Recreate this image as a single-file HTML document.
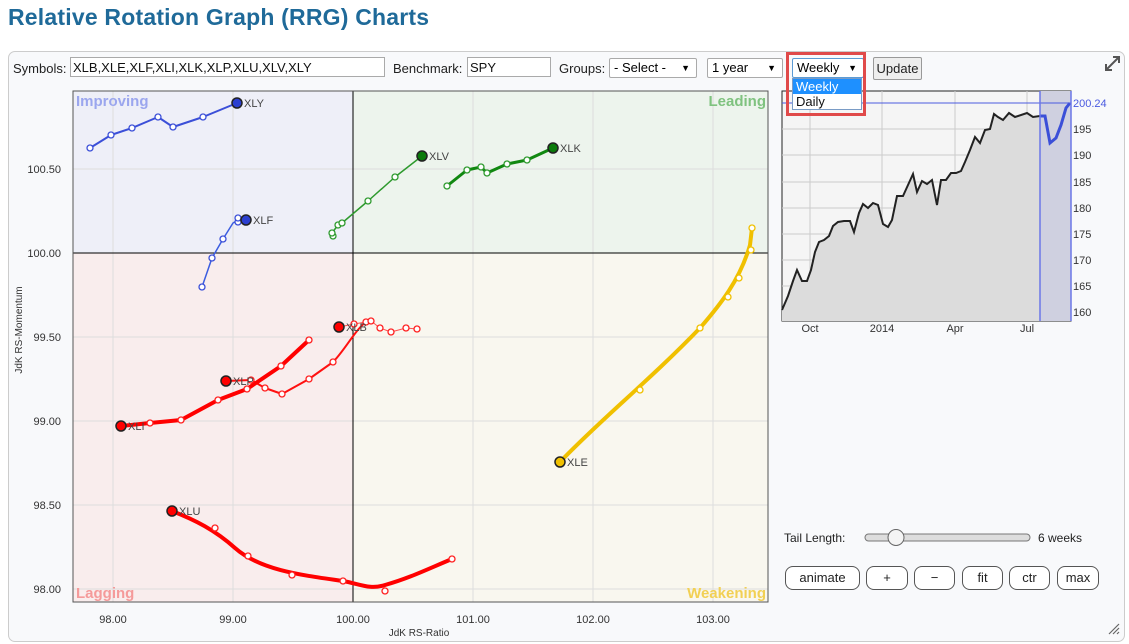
<!DOCTYPE html>
<html><head><meta charset="utf-8"><style>
body{margin:0;width:1129px;height:644px;background:#fff;font-family:"Liberation Sans",Arial,sans-serif;overflow:hidden;position:relative}
h1{position:absolute;left:8px;top:4px;margin:0;font-size:23px;font-weight:bold;color:#1f6a99;letter-spacing:0.2px}
.panel{position:absolute;left:8px;top:51px;width:1115px;height:589px;border:1px solid #ccc;border-radius:7px;background:#f8f9fb}
.ctl{position:absolute;font-size:13px;color:#222;z-index:3}
.in{position:absolute;height:20px;border:1px solid #aaa;background:#fff;font-size:13px;line-height:20px;padding-left:2px;box-sizing:border-box;color:#111;z-index:3}
.sel{position:absolute;height:20px;border:1px solid #aaa;background:#fff;font-size:13px;line-height:18px;padding-left:4px;box-sizing:border-box;border-radius:2px;z-index:3}
.sel b{position:absolute;right:6px;top:0;font-size:9px}
.btn{position:absolute;height:24px;border:1px solid #555;border-radius:8px;background:#fff;font-size:13px;line-height:22px;text-align:center;box-sizing:border-box;color:#222;z-index:3}
svg{z-index:1}
</style></head><body>
<h1>Relative Rotation Graph (RRG) Charts</h1>
<div class="panel"></div>
<svg style="position:absolute;left:0;top:0" width="1129" height="644">
<g font-family="Liberation Sans,Arial,sans-serif">
<path d="M1106 70 L1119 57 M1113 57 L1119 57 L1119 63 M1106 64 L1106 70 L1112 70" stroke="#555" stroke-width="2" fill="none"/>
<rect x="73" y="91" width="280" height="162" fill="#eeeff8"/>
<rect x="353" y="91" width="415" height="162" fill="#edf4ed"/>
<rect x="73" y="253" width="280" height="349" fill="#f9eded"/>
<rect x="353" y="253" width="415" height="349" fill="#f9f7ef"/>
<g stroke="#ddd" stroke-width="1">
<line x1="113" y1="91" x2="113" y2="602"/><line x1="233" y1="91" x2="233" y2="602"/><line x1="473" y1="91" x2="473" y2="602"/><line x1="593" y1="91" x2="593" y2="602"/><line x1="713" y1="91" x2="713" y2="602"/>
<line x1="73" y1="169" x2="768" y2="169"/><line x1="73" y1="337" x2="768" y2="337"/><line x1="73" y1="421" x2="768" y2="421"/><line x1="73" y1="505" x2="768" y2="505"/><line x1="73" y1="589" x2="768" y2="589"/>
</g>
<line x1="353" y1="91" x2="353" y2="602" stroke="#000"/>
<line x1="73" y1="253" x2="768" y2="253" stroke="#000"/>
<rect x="73" y="91" width="695" height="511" fill="none" stroke="#555"/>
<g font-weight="bold" font-size="15">
<text x="76" y="106" fill="#9ba6ee">Improving</text>
<text x="766" y="106" fill="#7fc27f" text-anchor="end">Leading</text>
<text x="76" y="598" fill="#f59a9a">Lagging</text>
<text x="766" y="598" fill="#f2d054" text-anchor="end">Weakening</text>
</g>
<g font-size="11" fill="#333" text-anchor="end">
<text x="61" y="173">100.50</text><text x="61" y="257">100.00</text><text x="61" y="341">99.50</text><text x="61" y="425">99.00</text><text x="61" y="509">98.50</text><text x="61" y="593">98.00</text>
</g>
<g font-size="11" fill="#333" text-anchor="middle">
<text x="113" y="623">98.00</text><text x="233" y="623">99.00</text><text x="353" y="623">100.00</text><text x="473" y="623">101.00</text><text x="593" y="623">102.00</text><text x="713" y="623">103.00</text>
<text x="419" y="636" font-size="10">JdK RS-Ratio</text>
<text transform="translate(22,330) rotate(-90)" font-size="10">JdK RS-Momentum</text>
</g>
<g fill="none" stroke-linejoin="round" stroke-linecap="round">
<polyline points="90,148 111,135 132,128 158,117 173,127 203,117 237,103" stroke="#3b4fd8" stroke-width="2"/>
<polyline points="202,287 212,258 223,239 233,223 238,220 246,220" stroke="#3b5de0" stroke-width="1.5"/>
<polyline points="333,236 332,233 338,225 342,223 368,201 395,177 422,156" stroke="#2e9a2e" stroke-width="1.5"/>
<polyline points="447,186 467,170 481,167 487,173 507,164 527,160 553,148" stroke="#118811" stroke-width="3"/>
<path d="M560,462 C600,420 650,380 700,328 C720,305 740,280 750,245 L752,228" stroke="#f0c000" stroke-width="4"/>
<polyline points="339,327 354,324 366,322 371,321 380,328 391,332 406,328 417,329" stroke="#ff5050" stroke-width="1"/>
<path d="M226,381 L251,380 265,388 282,394 309,379 333,362 C345,350 355,330 366,322" stroke="#ff1010" stroke-width="2"/>
<path d="M121,426 L150,423 181,420 218,400 247,389 281,366 309,340" stroke="#ff0000" stroke-width="4"/>
<path d="M172,511 C195,520 215,530 235,548 C260,570 300,575 343,581 C360,584 370,590 385,585 C410,578 430,568 452,559" stroke="#ff0000" stroke-width="4"/>
</g>
<g fill="#fff" stroke-width="1.3">
<g stroke="#3b4fd8"><circle cx="90" cy="148" r="3"/><circle cx="111" cy="135" r="3"/><circle cx="132" cy="128" r="3"/><circle cx="158" cy="117" r="3"/><circle cx="173" cy="127" r="3"/><circle cx="203" cy="117" r="3"/><circle cx="202" cy="287" r="3"/><circle cx="212" cy="258" r="3"/><circle cx="223" cy="239" r="3"/><circle cx="238" cy="222" r="3"/><circle cx="238" cy="218" r="3"/></g>
<g stroke="#2e9a2e"><circle cx="333" cy="236" r="3"/><circle cx="332" cy="233" r="3"/><circle cx="338" cy="225" r="3"/><circle cx="342" cy="223" r="3"/><circle cx="368" cy="201" r="3"/><circle cx="395" cy="177" r="3"/><circle cx="447" cy="186" r="3"/><circle cx="467" cy="170" r="3"/><circle cx="481" cy="167" r="3"/><circle cx="487" cy="173" r="3"/><circle cx="507" cy="164" r="3"/><circle cx="527" cy="160" r="3"/></g>
<g stroke="#f0c000"><circle cx="640" cy="390" r="3"/><circle cx="700" cy="328" r="3"/><circle cx="728" cy="297" r="3"/><circle cx="739" cy="278" r="3"/><circle cx="751" cy="250" r="3"/><circle cx="752" cy="228" r="3"/></g>
<g stroke="#ff2020"><circle cx="354" cy="324" r="3"/><circle cx="366" cy="322" r="3"/><circle cx="371" cy="321" r="3"/><circle cx="380" cy="328" r="3"/><circle cx="391" cy="332" r="3"/><circle cx="406" cy="328" r="3"/><circle cx="417" cy="329" r="3"/>
<circle cx="251" cy="380" r="3"/><circle cx="265" cy="388" r="3"/><circle cx="282" cy="394" r="3"/><circle cx="309" cy="379" r="3"/><circle cx="333" cy="362" r="3"/>
<circle cx="150" cy="423" r="3"/><circle cx="181" cy="420" r="3"/><circle cx="218" cy="400" r="3"/><circle cx="247" cy="389" r="3"/><circle cx="281" cy="366" r="3"/><circle cx="309" cy="340" r="3"/>
<circle cx="215" cy="528" r="3"/><circle cx="248" cy="556" r="3"/><circle cx="292" cy="575" r="3"/><circle cx="343" cy="581" r="3"/><circle cx="385" cy="591" r="3"/><circle cx="452" cy="559" r="3"/></g>
</g>
<g stroke="#222" stroke-width="1.5">
<circle cx="237" cy="103" r="5" fill="#2b3fd0"/><circle cx="246" cy="220" r="5" fill="#2b3fd0"/>
<circle cx="422" cy="156" r="5" fill="#0a7a0a"/><circle cx="553" cy="148" r="5" fill="#0a7a0a"/>
<circle cx="560" cy="462" r="5" fill="#f0c000"/>
<circle cx="339" cy="327" r="5" fill="#ff0000"/><circle cx="226" cy="381" r="5" fill="#ff0000"/><circle cx="121" cy="426" r="5" fill="#ff0000"/><circle cx="172" cy="511" r="5" fill="#ff0000"/>
</g>
<g font-size="11" fill="#444">
<text x="244" y="107">XLY</text><text x="253" y="224">XLF</text><text x="429" y="160">XLV</text><text x="560" y="152">XLK</text><text x="567" y="466">XLE</text>
<text x="346" y="331">XLB</text><text x="233" y="385">XLP</text><text x="128" y="430">XLI</text><text x="179" y="515">XLU</text>
</g>
<rect x="782" y="91" width="289" height="230" fill="#f5f5f5" stroke="#222"/>
<g stroke="#ccc"><line x1="810" y1="91" x2="810" y2="321"/><line x1="882" y1="91" x2="882" y2="321"/><line x1="955" y1="91" x2="955" y2="321"/><line x1="1027" y1="91" x2="1027" y2="321"/>
<line x1="782" y1="129" x2="1071" y2="129"/><line x1="782" y1="155" x2="1071" y2="155"/><line x1="782" y1="182" x2="1071" y2="182"/><line x1="782" y1="208" x2="1071" y2="208"/><line x1="782" y1="234" x2="1071" y2="234"/><line x1="782" y1="260" x2="1071" y2="260"/><line x1="782" y1="286" x2="1071" y2="286"/><line x1="782" y1="312" x2="1071" y2="312"/></g>
<path d="M782,310 L788,296 793,281 797,270 802,281 807,281 811,270 815,252 819,242 824,240 829,236 833,226 838,222 844,221 850,221 854,232 859,213 863,204 868,208 873,203 878,205 883,224 888,227 892,220 897,196 903,196 908,185 913,174 917,192 922,181 927,184 932,180 937,205 941,180 946,180 951,173 956,173 961,171 965,162 970,150 975,137 980,143 985,130 990,129 994,114 998,117 1003,120 1009,113 1015,117 1027,113 1033,117 1040,116 1040,321 782,321 Z" fill="#dcdcdc"/>
<rect x="1040" y="91" width="31" height="230" fill="#cfd0e0"/>
<polyline fill="none" stroke="#222" stroke-width="2" points="782,310 788,296 793,281 797,270 802,281 807,281 811,270 815,252 819,242 824,240 829,236 833,226 838,222 844,221 850,221 854,232 859,213 863,204 868,208 873,203 878,205 883,224 888,227 892,220 897,196 903,196 908,185 913,174 917,192 922,181 927,184 932,180 937,205 941,180 946,180 951,173 956,173 961,171 965,162 970,150 975,137 980,143 985,130 990,129 994,114 998,117 1003,120 1009,113 1015,117 1027,113 1033,117 1040,116"/>
<polyline fill="none" stroke="#3b4fd8" stroke-width="3" points="1040,116 1045,116 1050,143 1056,138 1061,125 1066,108 1070,103"/>
<line x1="782" y1="103" x2="1071" y2="103" stroke="#4a5ae0"/>
<line x1="1040" y1="91" x2="1040" y2="321" stroke="#6b77e8" stroke-width="1.5"/>
<line x1="1071" y1="91" x2="1071" y2="321" stroke="#6b77e8" stroke-width="1.5"/>
<g font-size="11" fill="#333">
<text x="1073" y="107" fill="#4a5ae0">200.24</text><text x="1073" y="133">195</text><text x="1073" y="159">190</text><text x="1073" y="186">185</text><text x="1073" y="212">180</text><text x="1073" y="238">175</text><text x="1073" y="264">170</text><text x="1073" y="290">165</text><text x="1073" y="316">160</text>
<text x="810" y="332" text-anchor="middle">Oct</text><text x="882" y="332" text-anchor="middle">2014</text><text x="955" y="332" text-anchor="middle">Apr</text><text x="1027" y="332" text-anchor="middle">Jul</text>
</g>
<text x="784" y="542" font-size="12" fill="#222">Tail Length:</text>
<rect x="865" y="534" width="165" height="7" rx="3.5" fill="#ddd" stroke="#777"/>
<circle cx="896" cy="537.5" r="8" fill="#f4f4f4" stroke="#666"/>
<text x="1038" y="542" font-size="12" fill="#222">6 weeks</text>
<path d="M1109 634 L1119 624 M1113 634 L1119 628 M1117 634 L1119 632" stroke="#666" stroke-width="1.2"/>
</g></svg>
<div class="ctl" style="left:13px;top:61px">Symbols:</div>
<div class="in" style="left:70px;top:57px;width:315px">XLB,XLE,XLF,XLI,XLK,XLP,XLU,XLV,XLY</div>
<div class="ctl" style="left:393px;top:61px">Benchmark:</div>
<div class="in" style="left:467px;top:57px;width:84px">SPY</div>
<div class="ctl" style="left:559px;top:61px">Groups:</div>
<div class="sel" style="left:609px;top:58px;width:88px">- Select -<b>▼</b></div>
<div class="sel" style="left:707px;top:58px;width:76px">1 year<b>▼</b></div>
<div class="sel" style="left:792px;top:58px;width:72px;border-color:#5b9bd5">Weekly<b>▼</b></div>
<div style="position:absolute;z-index:4;left:792px;top:78px;width:70px;height:32px;border:1px solid #7a9cc6;background:#fff;font-size:13px;box-sizing:border-box">
<div style="background:#1e90ff;color:#fff;height:15px;line-height:15px;padding-left:3px">Weekly</div>
<div style="height:15px;line-height:15px;padding-left:3px;color:#111">Daily</div></div>
<div style="position:absolute;z-index:5;left:786px;top:52px;width:80px;height:64px;border:3px solid #e04a4a;box-sizing:border-box"></div>
<div class="btn" style="left:873px;top:57px;width:49px;height:23px;border-radius:2px;border-color:#999;background:#eee;line-height:21px">Update</div>
<div class="btn" style="left:785px;top:566px;width:75px">animate</div>
<div class="btn" style="left:866px;top:566px;width:42px">+</div>
<div class="btn" style="left:914px;top:566px;width:41px">−</div>
<div class="btn" style="left:962px;top:566px;width:41px">fit</div>
<div class="btn" style="left:1009px;top:566px;width:41px">ctr</div>
<div class="btn" style="left:1057px;top:566px;width:42px">max</div>
</body></html>
